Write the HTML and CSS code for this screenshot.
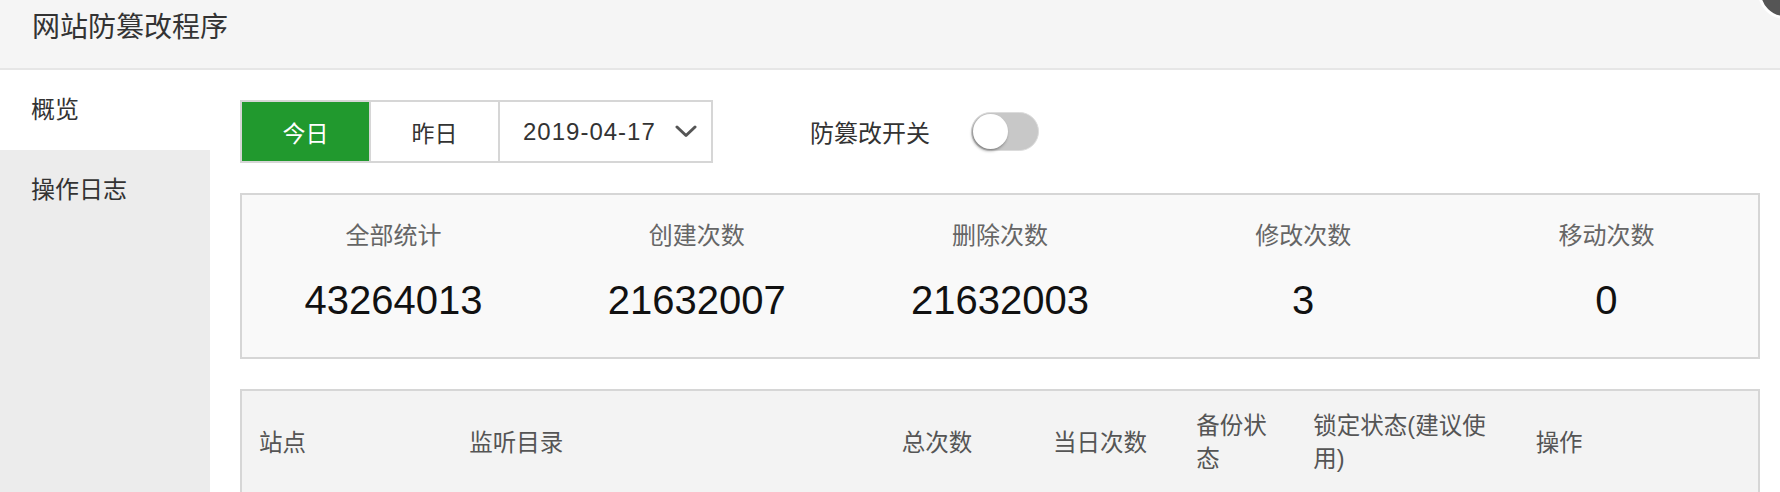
FILE: index.html
```html
<!DOCTYPE html>
<html lang="zh-CN">
<head>
    <meta charset="UTF-8">
    <meta name="viewport" content="width=device-width, initial-scale=1.0">
    <title>网站防篡改程序</title>
    <link rel="stylesheet" href="styles.css">
</head>
<body>
    <div class="layer">
        <div class="layer-title">网站防篡改程序</div>
        <span class="layer-close"></span>

        <div class="layer-body">
            <ul class="side-menu">
                <li class="active">概览</li>
                <li>操作日志</li>
            </ul>

            <div class="main">
                <div class="toolbar">
                    <div class="day-group">
                        <button class="day-btn on">今日</button>
                        <button class="day-btn">昨日</button>
                        <div class="day-select">
                            <span>2019-04-17</span>
                            <svg class="chevron" width="22" height="13" viewBox="0 0 22 13">
                                <polyline points="2,2 11,10.5 20,2" fill="none" stroke="#555" stroke-width="3" stroke-linecap="round" stroke-linejoin="round"/>
                            </svg>
                        </div>
                    </div>
                    <span class="switch-label">防篡改开关</span>
                    <label class="switch">
                        <input type="checkbox">
                        <span class="slider"></span>
                    </label>
                </div>

                <!-- 统计 -->
                <div class="stats">
                    <div class="stat-item">
                        <div class="stat-name">全部统计</div>
                        <div class="stat-num">43264013</div>
                    </div>
                    <div class="stat-item">
                        <div class="stat-name">创建次数</div>
                        <div class="stat-num">21632007</div>
                    </div>
                    <div class="stat-item">
                        <div class="stat-name">删除次数</div>
                        <div class="stat-num">21632003</div>
                    </div>
                    <div class="stat-item">
                        <div class="stat-name">修改次数</div>
                        <div class="stat-num">3</div>
                    </div>
                    <div class="stat-item">
                        <div class="stat-name">移动次数</div>
                        <div class="stat-num">0</div>
                    </div>
                </div>

                <!-- 站点列表 -->
                <table class="site-table">
                    <colgroup>
                        <col class="c-site">
                        <col class="c-path">
                        <col class="c-total">
                        <col class="c-today">
                        <col class="c-backup">
                        <col class="c-lock">
                        <col class="c-opt">
                    </colgroup>
                    <thead>
                        <tr>
                            <th>站点</th>
                            <th>监听目录</th>
                            <th>总次数</th>
                            <th>当日次数</th>
                            <th>备份状态</th>
                            <th>锁定状态(建议使用)</th>
                            <th>操作</th>
                        </tr>
                    </thead>
                </table>
            </div>
        </div>
    </div>
</body>
</html>
```

FILE: styles.css
```css
* {
    margin: 0;
    padding: 0;
    box-sizing: border-box;
}

body {
    font-family: "Liberation Sans", "Noto Sans CJK SC", sans-serif;
    background-color: #fff;
    color: #333;
}

.layer {
    position: relative;
    height: 100vh;
    overflow: hidden;
    display: flex;
    flex-direction: column;
}

.layer-title {
    flex-shrink: 0;
    height: 70px;
    padding: 0 32px;
    font-size: 28px;
    line-height: 56px;
    color: #333;
    background-color: #f5f5f5;
    border-bottom: 2px solid #e6e6e6;
}

.layer-close {
    position: absolute;
    top: -35px;
    right: -32px;
    width: 54px;
    height: 54px;
    border-radius: 50%;
    background-color: #555;
    border: 3px solid #fff;
}

.layer-body {
    flex: 1;
    display: flex;
}

.side-menu {
    width: 210px;
    flex-shrink: 0;
    list-style: none;
    background-color: #ececec;
}

.side-menu li {
    height: 80px;
    line-height: 80px;
    padding-left: 31px;
    font-size: 24px;
    color: #333;
    cursor: pointer;
}

.side-menu li.active {
    background-color: #fff;
}

.main {
    flex: 1;
    padding: 30px 20px 0 30px;
}

.toolbar {
    display: flex;
    align-items: center;
}

.day-group {
    display: flex;
    height: 63px;
    border: 2px solid #d6d6d6;
}

.day-btn {
    width: 129px;
    border: none;
    border-right: 2px solid #d6d6d6;
    background-color: #fff;
    font-family: inherit;
    font-size: 23px;
    color: #333;
    cursor: pointer;
}

.day-btn.on {
    background-color: #21992e;
    color: #fff;
}

.day-select {
    width: 211px;
    display: flex;
    align-items: center;
    justify-content: space-between;
    padding: 0 14px 0 23px;
    font-size: 24px;
    letter-spacing: 1px;
    color: #333;
}

.switch-label {
    margin-left: 97px;
    font-size: 24px;
    color: #333;
}

.switch {
    position: relative;
    margin-left: 41px;
    width: 68px;
    height: 39px;
}

.switch input {
    display: none;
}

.slider {
    display: block;
    width: 100%;
    height: 100%;
    border-radius: 20px;
    background-color: #c8c8c8;
    border: 1px solid #dcdcdc;
    cursor: pointer;
}

.slider::before {
    content: "";
    position: absolute;
    top: 2px;
    left: 2px;
    width: 35px;
    height: 35px;
    border-radius: 50%;
    background-color: #fff;
    box-shadow: -1px 2px 3px rgba(0, 0, 0, 0.35);
}

.stats {
    margin-top: 30px;
    display: grid;
    grid-template-columns: repeat(5, 1fr);
    padding: 26px 0 33px;
    background-color: #f9f9f9;
    border: 2px solid #d6d6d6;
    text-align: center;
}

.stat-name {
    font-size: 24px;
    line-height: 30px;
    color: #666;
}

.stat-num {
    margin-top: 25px;
    font-size: 40px;
    line-height: 48px;
    color: #111;
}

.site-table {
    margin-top: 30px;
    width: 100%;
    table-layout: fixed;
    border-collapse: collapse;
    background-color: #f3f3f3;
    border: 2px solid #d6d6d6;
}

.c-site { width: 211px; }
.c-path { width: 432px; }
.c-total { width: 151px; }
.c-today { width: 143px; }
.c-backup { width: 117px; }
.c-lock { width: 222px; }
.c-opt { width: 240px; }

.site-table th {
    padding: 19px 17px;
    text-align: left;
    vertical-align: middle;
    font-weight: normal;
    font-size: 23.5px;
    line-height: 33px;
    color: #555;
}
```
